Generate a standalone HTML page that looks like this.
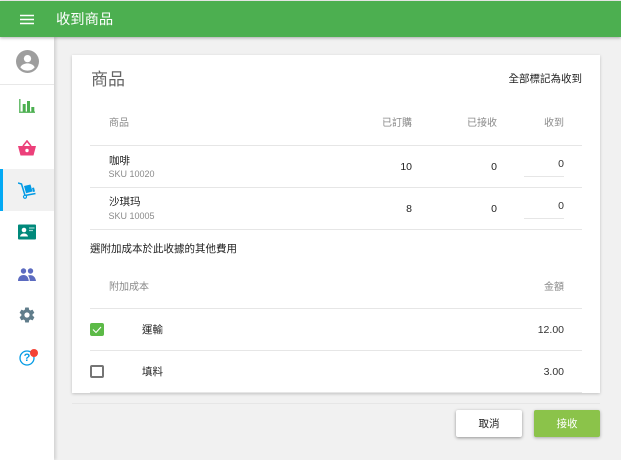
<!DOCTYPE html>
<html lang="zh-Hant"><head><meta charset="utf-8"><style>
html,body{margin:0;padding:0}
body{width:621px;height:460px;overflow:hidden;background:#f1f1f1;position:relative;font-family:"Liberation Sans","Noto Sans CJK TC",sans-serif;color:#222}
.a{position:absolute;white-space:nowrap}
.t{font-size:10.5px;line-height:14px}
.h{color:#8a8a8a;font-size:10px;line-height:14px}
.r{text-align:right}
.l{position:absolute;height:1px;background:#e6e6e6}
.n{font-size:10.5px;line-height:14px;color:#333}
.sku{font-size:9px;line-height:12px;color:#8a8a8a}
svg{position:absolute;display:block}
</style></head><body>
<div class="a" style="left:0;top:1px;width:621px;height:36px;background:#4caf50;box-shadow:0 1px 3px rgba(0,0,0,.3);z-index:3"></div>
<div class="a" style="left:0;top:37px;width:54px;height:423px;background:#fff;box-shadow:2px 0 3px rgba(0,0,0,.13);z-index:2"></div>
<div style="position:absolute;left:0;top:0;width:621px;height:460px;z-index:4">
<svg style="left:20px;top:14px" width="14" height="11" viewBox="0 0 14 11"><path d="M0 1.500h14M0 5.500h14M0 9.500h14" stroke="#fff" stroke-width="1.600"/></svg>
<div class="a" style="left:56px;top:10px;font-size:14.3px;line-height:20px;color:#fff">收到商品</div>

<svg style="left:16px;top:50px" width="23" height="23" viewBox="0 0 24 24"><circle cx="12" cy="12" r="12" fill="#9e9e9e"/><circle cx="12" cy="9" r="3.800" fill="#fff"/><path d="M4.500 18c1.500-3 5-4 7.500-4s6 1 7.500 4c-2 2.500-4.500 3.500-7.500 3.500S6.500 20.500 4.500 18z" fill="#fff"/></svg>
<div class="l" style="left:0;top:84px;width:54px;background:#e8e8e8"></div>
<svg style="left:19px;top:99px" width="16" height="15" viewBox="0 0 16 15"><path d="M.8 0v13.200H16" stroke="#66bb6a" stroke-width="1.500" fill="none"/><path d="M3.700 5h3v8H3.700zM8 2h3v11H8zM12.300 8h3v5h-3z" fill="#4caf50"/></svg>
<svg style="left:18px;top:140px" width="18" height="16" viewBox="0 0 18 16"><path d="M0 6h18l-2.500 9.500h-13z" fill="#ec407a"/><path d="M5 6l4-5 4 5" stroke="#ec407a" stroke-width="1.600" fill="none"/><circle cx="9" cy="10.500" r="1.700" fill="#fff"/></svg>
<div class="a" style="left:0;top:169px;width:54px;height:42px;background:#f1f1f1"></div>
<div class="a" style="left:0;top:169px;width:3px;height:42px;background:#03a9f4"></div>
<svg style="left:18px;top:182px" width="18" height="17" viewBox="0 0 18 17"><path d="M0 1l3.500 1L7 13.500l10.500-2" stroke="#039be5" stroke-width="1.500" fill="none"/><path d="M6 4l6.500-1.500 2 7L8 11.200zM14 6l2-.5 1 4-2 .5z" fill="#039be5"/><circle cx="7" cy="14.800" r="1.500" fill="#fff" stroke="#039be5" stroke-width="1.200"/></svg>
<svg style="left:18px;top:224px" width="18" height="16" viewBox="0 0 18 16"><rect width="18" height="15" y=".5" rx="1" fill="#00897b"/><circle cx="6" cy="6" r="2.300" fill="#fff"/><path d="M2 12.500c.5-2.500 2.500-3 4-3s3.500.5 4 3z" fill="#fff"/><path d="M11 4h5.500M11 6.500h4" stroke="#9fd6cf" stroke-width="1.300"/></svg>
<svg style="left:18px;top:268px" width="18" height="13" viewBox="0 0 18 13"><circle cx="5.500" cy="3" r="2.700" fill="#5c6bc0"/><circle cx="12.500" cy="3" r="2.700" fill="#5c6bc0"/><path d="M0 13c0-4 2.500-6 5.500-6s5 2 5.300 6zM11.800 13c0-2-.6-4-1.800-5.400 3.800-1.600 7.500.8 8 5.400z" fill="#5c6bc0"/></svg>
<svg style="left:18px;top:306px" width="18" height="18" viewBox="0 0 24 24"><path fill="#607d8b" d="M19.400 13c.05-.3.1-.65.1-1s-.05-.7-.1-1l2.100-1.650c.2-.15.25-.4.1-.65l-2-3.450c-.1-.2-.4-.3-.6-.2l-2.500 1c-.5-.4-1.100-.7-1.700-1l-.4-2.650C14.400 2.200 14.200 2 14 2h-4c-.2 0-.4.2-.5.4l-.4 2.650c-.6.3-1.200.6-1.700 1l-2.500-1c-.2-.1-.5 0-.6.2l-2 3.450c-.1.25-.1.5.1.65L4.500 11c0 .3-.1.65-.1 1s.05.7.1 1l-2.100 1.650c-.2.15-.25.4-.1.65l2 3.450c.1.2.4.3.6.2l2.500-1c.5.4 1.100.7 1.700 1l.4 2.650c.1.2.3.4.5.4h4c.2 0 .4-.2.500-.4l.4-2.650c.6-.3 1.200-.6 1.700-1l2.500 1c.2.1.5 0 .6-.2l2-3.450c.1-.25.1-.5-.1-.65zM12 15.500a3.500 3.500 0 1 1 0-7 3.500 3.500 0 0 1 0 7z"/></svg>
<svg style="left:19px;top:350px" width="16" height="16" viewBox="0 0 16 16"><circle cx="8" cy="8" r="7" fill="#fff" stroke="#039be5" stroke-width="1.300"/></svg>
<div class="a" style="left:19px;top:351px;width:16px;text-align:center;font-size:11px;line-height:14px;font-weight:bold;color:#039be5">?</div>
<div class="a" style="left:30px;top:349px;width:8px;height:8px;border-radius:50%;background:#f44336"></div>

<div class="a" style="left:72px;top:55px;width:528px;height:338px;background:#fff;box-shadow:0 1px 3px rgba(0,0,0,.2)"></div>
<div class="a" style="left:91px;top:69px;font-size:17px;line-height:22px;color:#666">商品</div>
<div class="a t r" style="right:39px;top:72px;color:#222">全部標記為收到</div>

<div class="a h" style="left:109px;top:117px">商品</div>
<div class="a h r" style="right:209px;top:117px">已訂購</div>
<div class="a h r" style="right:124px;top:117px">已接收</div>
<div class="a h r" style="right:57px;top:117px">收到</div>
<div class="l" style="left:90px;top:145px;width:492px"></div>

<div class="a t" style="left:109px;top:154px">咖啡</div>
<div class="a sku" style="left:108.500px;top:168px">SKU 10020</div>
<div class="a n r" style="right:209px;top:160px;color:#222">10</div>
<div class="a n r" style="right:124px;top:160px;color:#222">0</div>
<div class="a n r" style="right:57px;top:157px">0</div>
<div class="l" style="left:524px;top:176px;width:40px"></div>
<div class="l" style="left:90px;top:187px;width:492px"></div>

<div class="a t" style="left:109px;top:195px">沙琪玛</div>
<div class="a sku" style="left:108.500px;top:210px">SKU 10005</div>
<div class="a n r" style="right:209px;top:202px;color:#222">8</div>
<div class="a n r" style="right:124px;top:202px;color:#222">0</div>
<div class="a n r" style="right:57px;top:199px">0</div>
<div class="l" style="left:524px;top:218px;width:40px"></div>
<div class="l" style="left:90px;top:229px;width:492px"></div>

<div class="a t" style="left:90px;top:242px">選附加成本於此收據的其他費用</div>
<div class="a h" style="left:109px;top:281px">附加成本</div>
<div class="a h r" style="right:57px;top:281px">金額</div>
<div class="l" style="left:90px;top:308px;width:492px"></div>

<div class="a" style="left:90px;top:323px;width:14px;height:13px;border-radius:2px;background:#5cba47"></div>
<svg style="left:90px;top:323px" width="14" height="13" viewBox="0 0 14 13"><path d="M3 6.500l3 3 5-5.500" stroke="#fff" stroke-width="1.100" fill="none"/></svg>
<div class="a t" style="left:142px;top:323px">運輸</div>
<div class="a n r" style="right:57px;top:323px">12.00</div>
<div class="l" style="left:90px;top:350px;width:492px"></div>

<div class="a" style="left:90px;top:365px;width:10px;height:9px;border:2px solid #757575;border-radius:2px"></div>
<div class="a t" style="left:142px;top:365px">填料</div>
<div class="a n r" style="right:57px;top:365px">3.00</div>
<div class="l" style="left:90px;top:392px;width:492px"></div>

<div class="l" style="left:72px;top:403px;width:528px"></div>
<div class="a t" style="left:456px;top:410px;width:66px;height:27px;line-height:29px;text-align:center;background:#fff;border-radius:2px;box-shadow:0 1px 3px rgba(0,0,0,.4)">取消</div>
<div class="a t" style="left:534px;top:410px;width:66px;height:27px;line-height:29px;text-align:center;background:#8bc34a;color:#fff;border-radius:2px;box-shadow:0 1px 3px rgba(0,0,0,.3)">接收</div>
</div>
</body></html>
